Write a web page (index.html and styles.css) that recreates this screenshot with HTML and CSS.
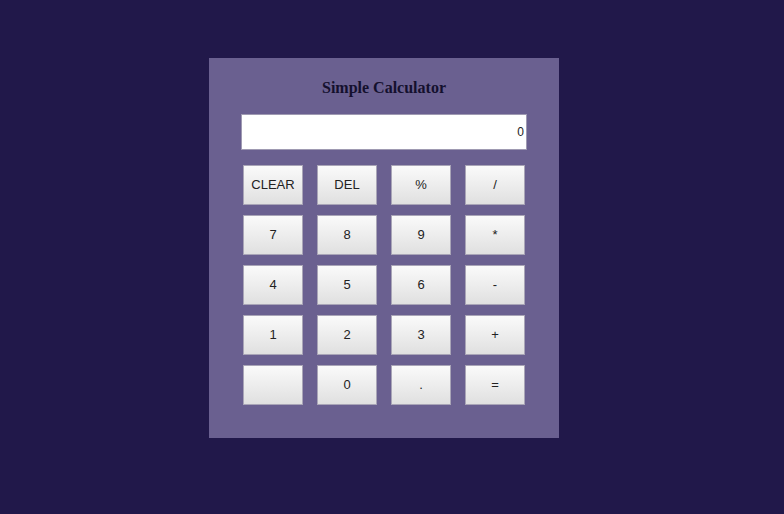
FILE: index.html
```html
<!DOCTYPE html>
<html>
<head>
<meta charset="utf-8">
<link rel="stylesheet" href="styles.css">
</head>
<body>
<div class="calc">
  <div class="title">Simple Calculator</div>
  <div class="display">0</div>
  <div class="keys">
    <button class="key">CLEAR</button>
    <button class="key">DEL</button>
    <button class="key">%</button>
    <button class="key">/</button>
    <button class="key">7</button>
    <button class="key">8</button>
    <button class="key">9</button>
    <button class="key">*</button>
    <button class="key">4</button>
    <button class="key">5</button>
    <button class="key">6</button>
    <button class="key">-</button>
    <button class="key">1</button>
    <button class="key">2</button>
    <button class="key">3</button>
    <button class="key">+</button>
    <button class="key"></button>
    <button class="key">0</button>
    <button class="key">.</button>
    <button class="key">=</button>
  </div>
</div>
</body>
</html>
```
FILE: styles.css
```css
html, body {
  margin: 0;
  padding: 0;
  background: #21184a;
  height: 100%;
}
body {
  padding-top: 58px;
  box-sizing: border-box;
}
.calc {
  width: 350px;
  height: 380px;
  margin-left: 209px;
  background: #6a6090;
  box-sizing: border-box;
  padding: 20px 0 0 0;
}
.title {
  font-family: "Liberation Serif", serif;
  font-weight: bold;
  font-size: 16px;
  line-height: 20px;
  text-align: center;
  color: #14102e;
  margin-bottom: 16px;
}
.display {
  margin-left: 32px;
  width: 286px;
  height: 36px;
  box-sizing: border-box;
  background: #ffffff;
  border: 1px solid #9f9ab2;
  font-family: "Liberation Sans", Arial, sans-serif;
  font-size: 12px;
  line-height: 34px;
  text-align: right;
  padding-right: 2px;
  color: #222;
}
.keys {
  margin: 15px 0 0 34px;
  display: grid;
  grid-template-columns: repeat(4, 60px);
  grid-auto-rows: 40px;
  column-gap: 14px;
  row-gap: 10px;
}
.key {
  margin: 0;
  padding: 0 0 2px 0;
  border: 1px solid #a9a5b7;
  border-radius: 0;
  background: linear-gradient(to bottom, #fafafa, #e0e0e0);
  font-family: "Liberation Sans", Arial, sans-serif;
  font-size: 13px;
  color: #222;
  box-sizing: border-box;
}
```
